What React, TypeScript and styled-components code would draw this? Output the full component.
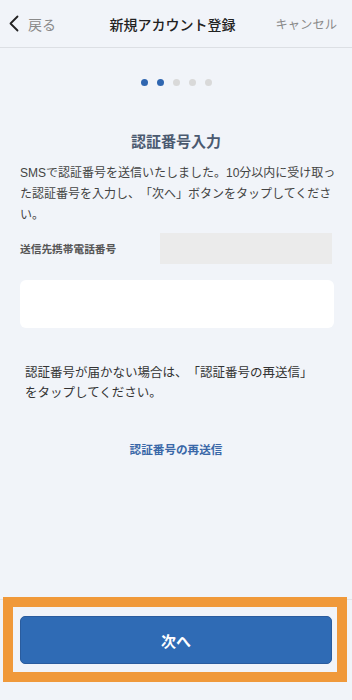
import React from "react";
import styled, { createGlobalStyle } from "styled-components";

const Global = createGlobalStyle`
  html, body { margin: 0; padding: 0; background: #f1f4f9; }
  body {
    font-family: "Liberation Sans", "Noto Sans CJK JP", sans-serif;
    text-spacing-trim: space-all;
  }
  * { box-sizing: border-box; }
`;

const Page = styled.div`
  display: flex;
  flex-direction: column;
  min-height: 700px;
  background: #f1f4f9;
  position: relative;
`;

const Header = styled.header`
  height: 48px;
  display: grid;
  grid-template-columns: 1fr auto 1fr;
  align-items: center;
  border-bottom: 1px solid #dcdfe4;
  padding: 0 15px 0 8px;
`;

const Back = styled.div`
  display: flex;
  align-items: center;
  gap: 8px;
  color: #8a8a8a;
  font-size: 14px;
`;

const Title = styled.div`
  font-size: 14px;
  color: #222;
  font-weight: 500;
`;

const Cancel = styled.div`
  justify-self: end;
  font-size: 12.3px;
  color: #8a8a8a;
`;

const Main = styled.main`
  flex: 1;
  display: flex;
  flex-direction: column;
  padding: 0 20px;
`;

const Dots = styled.div`
  display: flex;
  justify-content: center;
  gap: 9px;
  margin-top: 31px;
`;

const Dot = styled.span<{ $on: boolean }>`
  width: 7px;
  height: 7px;
  border-radius: 50%;
  background: ${(p) => (p.$on ? "#2f66b0" : "#d9d9d9")};
`;

const StepTitle = styled.h2`
  margin: 45px 0 0;
  text-align: center;
  font-size: 15px;
  line-height: 22px;
  font-weight: 700;
  color: #4b5a70;
`;

const Lead = styled.p`
  margin: 10px -12px 0 0;
  font-size: 12px;
  line-height: 21px;
  color: #444;
  white-space: nowrap;
`;

const FieldRow = styled.div`
  display: flex;
  align-items: center;
  justify-content: space-between;
  margin-top: 7px;
`;

const Label = styled.div`
  font-size: 10.7px;
  font-weight: 700;
  color: #555;
`;

const ReadOnly = styled.div`
  width: 172px;
  height: 31px;
  background: #ebebeb;
`;

const Input = styled.input`
  margin-top: 16px;
  width: 314px;
  height: 48px;
  border: none;
  border-radius: 6px;
  background: #fff;
  outline: none;
`;

const Note = styled.p`
  margin: 35px 0 0;
  padding-left: 5px;
  font-size: 12.5px;
  line-height: 20px;
  color: #333;
`;

const ResendLink = styled.a`
  margin-top: 38px;
  align-self: center;
  font-size: 11.6px;
  font-weight: 700;
  color: #3a68a8;
  text-decoration: none;
`;

const Footer = styled.footer`
  border-top: 1px solid #e2e4e8;
  padding: 16px 20px 36px;
`;

const NextButton = styled.button`
  width: 100%;
  height: 48px;
  border-radius: 5px;
  border: 1px solid #2a5c9e;
  background: #2f6bb5;
  color: #fff;
  font-family: "Liberation Sans", "Noto Sans CJK JP", sans-serif;
  font-size: 15px;
  font-weight: 700;
`;

const Highlight = styled.div`
  position: absolute;
  left: 3px;
  top: 597px;
  width: 344px;
  height: 85px;
  border: 10px solid #f0993a;
  pointer-events: none;
`;

export default function App() {
  return (
    <Page>
      <Global />
      <Header>
        <Back>
          <svg width="12" height="17" viewBox="0 0 12 17" fill="none">
            <path d="M9.5 1.5 L2.5 8.5 L9.5 15.5" stroke="#222" strokeWidth="1.8" strokeLinecap="round" strokeLinejoin="round" />
          </svg>
          戻る
        </Back>
        <Title>新規アカウント登録</Title>
        <Cancel>キャンセル</Cancel>
      </Header>
      <Main>
        <Dots>
          {[true, true, false, false, false].map((on, i) => (
            <Dot key={i} $on={on} />
          ))}
        </Dots>
        <StepTitle>認証番号入力</StepTitle>
        <Lead>
          SMSで認証番号を送信いたしました。10分以内に受け取っ
          <br />
          た認証番号を入力し、「次へ」ボタンをタップしてくださ
          <br />
          い。
        </Lead>
        <FieldRow>
          <Label>送信先携帯電話番号</Label>
          <ReadOnly />
        </FieldRow>
        <Input type="text" />
        <Note>
          認証番号が届かない場合は、「認証番号の再送信」
          <br />
          をタップしてください。
        </Note>
        <ResendLink href="#">認証番号の再送信</ResendLink>
      </Main>
      <Footer>
        <NextButton>次へ</NextButton>
      </Footer>
      <Highlight />
    </Page>
  );
}
